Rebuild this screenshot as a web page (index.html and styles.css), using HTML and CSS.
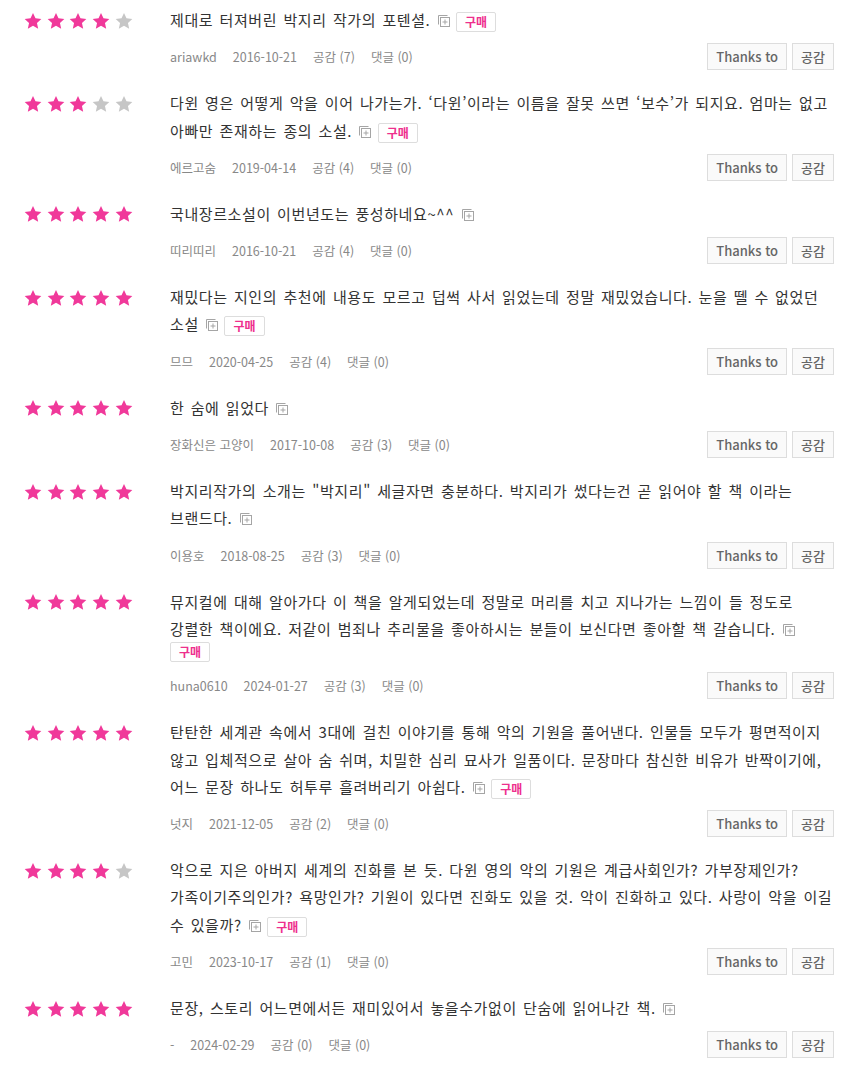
FILE: index.html
```html
<!DOCTYPE html>
<html lang="ko">
<head>
<meta charset="utf-8">
<link rel="stylesheet" href="styles.css">
</head>
<body>
<svg width="0" height="0" class="defs">
  <defs>
    <symbol id="star" viewBox="0 0 24 24"><path d="M12 1.2l3.3 7.1 7.8.9-5.8 5.3 1.6 7.7L12 18.3l-6.9 3.9 1.6-7.7L.9 9.2l7.8-.9z"/></symbol>
    <symbol id="more" viewBox="0 0 13 13"><path d="M1.5 10.5V1.5H10.5" fill="none" stroke="currentColor"/><rect x="3.5" y="3.5" width="9" height="9" fill="#fff" stroke="currentColor"/><path d="M8 5.5v5M5.5 8h5" stroke="currentColor"/></symbol>
  </defs>
</svg>
<ul class="reviews">
  <li class="review">
    <div class="stars"><svg class="on"><use href="#star"/></svg><svg class="on"><use href="#star"/></svg><svg class="on"><use href="#star"/></svg><svg class="on"><use href="#star"/></svg><svg class="off"><use href="#star"/></svg></div>
    <div class="body">
      <p class="text"><span class="t">제대로 터져버린 박지리 작가의 포텐셜.</span> <svg class="more"><use href="#more"/></svg> <span class="buy">구매</span></p>
      <div class="meta"><div class="info"><span>ariawkd</span><span>2016-10-21</span><span>공감 (7)</span><span>댓글 (0)</span></div><div class="actions"><button class="btn">Thanks to</button><button class="btn">공감</button></div></div>
    </div>
  </li>
  <li class="review">
    <div class="stars"><svg class="on"><use href="#star"/></svg><svg class="on"><use href="#star"/></svg><svg class="on"><use href="#star"/></svg><svg class="off"><use href="#star"/></svg><svg class="off"><use href="#star"/></svg></div>
    <div class="body">
      <p class="text"><span class="t">다윈 영은 어떻게 악을 이어 나가는가. ‘다윈’이라는 이름을 잘못 쓰면 ‘보수’가 되지요. 엄마는 없고 아빠만 존재하는 종의 소설.</span> <svg class="more"><use href="#more"/></svg> <span class="buy">구매</span></p>
      <div class="meta"><div class="info"><span>에르고숨</span><span>2019-04-14</span><span>공감 (4)</span><span>댓글 (0)</span></div><div class="actions"><button class="btn">Thanks to</button><button class="btn">공감</button></div></div>
    </div>
  </li>
  <li class="review">
    <div class="stars"><svg class="on"><use href="#star"/></svg><svg class="on"><use href="#star"/></svg><svg class="on"><use href="#star"/></svg><svg class="on"><use href="#star"/></svg><svg class="on"><use href="#star"/></svg></div>
    <div class="body">
      <p class="text"><span class="t">국내장르소설이 이번년도는 풍성하네요~^^</span> <svg class="more"><use href="#more"/></svg></p>
      <div class="meta"><div class="info"><span>띠리띠리</span><span>2016-10-21</span><span>공감 (4)</span><span>댓글 (0)</span></div><div class="actions"><button class="btn">Thanks to</button><button class="btn">공감</button></div></div>
    </div>
  </li>
  <li class="review">
    <div class="stars"><svg class="on"><use href="#star"/></svg><svg class="on"><use href="#star"/></svg><svg class="on"><use href="#star"/></svg><svg class="on"><use href="#star"/></svg><svg class="on"><use href="#star"/></svg></div>
    <div class="body">
      <p class="text"><span class="t">재밌다는 지인의 추천에 내용도 모르고 덥썩 사서 읽었는데 정말 재밌었습니다. 눈을 뗄 수 없었던 소설</span> <svg class="more"><use href="#more"/></svg> <span class="buy">구매</span></p>
      <div class="meta"><div class="info"><span>므므</span><span>2020-04-25</span><span>공감 (4)</span><span>댓글 (0)</span></div><div class="actions"><button class="btn">Thanks to</button><button class="btn">공감</button></div></div>
    </div>
  </li>
  <li class="review">
    <div class="stars"><svg class="on"><use href="#star"/></svg><svg class="on"><use href="#star"/></svg><svg class="on"><use href="#star"/></svg><svg class="on"><use href="#star"/></svg><svg class="on"><use href="#star"/></svg></div>
    <div class="body">
      <p class="text"><span class="t">한 숨에 읽었다</span> <svg class="more"><use href="#more"/></svg></p>
      <div class="meta"><div class="info"><span>장화신은 고양이</span><span>2017-10-08</span><span>공감 (3)</span><span>댓글 (0)</span></div><div class="actions"><button class="btn">Thanks to</button><button class="btn">공감</button></div></div>
    </div>
  </li>
  <li class="review">
    <div class="stars"><svg class="on"><use href="#star"/></svg><svg class="on"><use href="#star"/></svg><svg class="on"><use href="#star"/></svg><svg class="on"><use href="#star"/></svg><svg class="on"><use href="#star"/></svg></div>
    <div class="body">
      <p class="text"><span class="t">박지리작가의 소개는 "박지리" 세글자면 충분하다. 박지리가 썼다는건 곧 읽어야 할 책 이라는 브랜드다.</span> <svg class="more"><use href="#more"/></svg></p>
      <div class="meta"><div class="info"><span>이용호</span><span>2018-08-25</span><span>공감 (3)</span><span>댓글 (0)</span></div><div class="actions"><button class="btn">Thanks to</button><button class="btn">공감</button></div></div>
    </div>
  </li>
  <li class="review">
    <div class="stars"><svg class="on"><use href="#star"/></svg><svg class="on"><use href="#star"/></svg><svg class="on"><use href="#star"/></svg><svg class="on"><use href="#star"/></svg><svg class="on"><use href="#star"/></svg></div>
    <div class="body">
      <p class="text"><span class="t">뮤지컬에 대해 알아가다 이 책을 알게되었는데 정말로 머리를 치고 지나가는 느낌이 들 정도로 강렬한 책이에요. 저같이 범죄나 추리물을 좋아하시는 분들이 보신다면 좋아할 책 갈습니다.</span> <svg class="more"><use href="#more"/></svg> <span class="buy">구매</span></p>
      <div class="meta"><div class="info"><span>huna0610</span><span>2024-01-27</span><span>공감 (3)</span><span>댓글 (0)</span></div><div class="actions"><button class="btn">Thanks to</button><button class="btn">공감</button></div></div>
    </div>
  </li>
  <li class="review">
    <div class="stars"><svg class="on"><use href="#star"/></svg><svg class="on"><use href="#star"/></svg><svg class="on"><use href="#star"/></svg><svg class="on"><use href="#star"/></svg><svg class="on"><use href="#star"/></svg></div>
    <div class="body">
      <p class="text"><span class="t">탄탄한 세계관 속에서 3대에 걸친 이야기를 통해 악의 기원을 풀어낸다. 인물들 모두가 평면적이지 않고 입체적으로 살아 숨 쉬며, 치밀한 심리 묘사가 일품이다. 문장마다 참신한 비유가 반짝이기에, 어느 문장 하나도 허투루 흘려버리기 아쉽다.</span> <svg class="more"><use href="#more"/></svg> <span class="buy">구매</span></p>
      <div class="meta"><div class="info"><span>넛지</span><span>2021-12-05</span><span>공감 (2)</span><span>댓글 (0)</span></div><div class="actions"><button class="btn">Thanks to</button><button class="btn">공감</button></div></div>
    </div>
  </li>
  <li class="review">
    <div class="stars"><svg class="on"><use href="#star"/></svg><svg class="on"><use href="#star"/></svg><svg class="on"><use href="#star"/></svg><svg class="on"><use href="#star"/></svg><svg class="off"><use href="#star"/></svg></div>
    <div class="body">
      <p class="text"><span class="t">악으로 지은 아버지 세계의 진화를 본 듯. 다윈 영의 악의 기원은 계급사회인가? 가부장제인가? 가족이기주의인가? 욕망인가? 기원이 있다면 진화도 있을 것. 악이 진화하고 있다. 사랑이 악을 이길 수 있을까?</span> <svg class="more"><use href="#more"/></svg> <span class="buy">구매</span></p>
      <div class="meta"><div class="info"><span>고민</span><span>2023-10-17</span><span>공감 (1)</span><span>댓글 (0)</span></div><div class="actions"><button class="btn">Thanks to</button><button class="btn">공감</button></div></div>
    </div>
  </li>
  <li class="review">
    <div class="stars"><svg class="on"><use href="#star"/></svg><svg class="on"><use href="#star"/></svg><svg class="on"><use href="#star"/></svg><svg class="on"><use href="#star"/></svg><svg class="on"><use href="#star"/></svg></div>
    <div class="body">
      <p class="text"><span class="t">문장, 스토리 어느면에서든 재미있어서 놓을수가없이 단숨에 읽어나간 책.</span> <svg class="more"><use href="#more"/></svg></p>
      <div class="meta"><div class="info"><span>-</span><span>2024-02-29</span><span>공감 (0)</span><span>댓글 (0)</span></div><div class="actions"><button class="btn">Thanks to</button><button class="btn">공감</button></div></div>
    </div>
  </li>
</ul>
</body>
</html>
```
FILE: styles.css
```css
html, body {
  margin: 0;
  padding: 0;
  background: #fff;
}
body {
  font-family: "Noto Sans CJK KR", "Noto Sans", sans-serif;
  color: #333;
}
.defs {
  position: absolute;
  width: 0;
  height: 0;
}
.reviews {
  list-style: none;
  margin: 0;
  padding: 0;
}
.review {
  display: flex;
  padding: 6px 15px 13px 24px;
}
.stars {
  width: 146px;
  flex: none;
  display: flex;
  align-items: center;
  gap: 4.7px;
  height: 29px;
}
.stars svg {
  width: 18px;
  height: 18px;
}
.stars .on { fill: #f0399a; }
.stars .off { fill: #c6c6c6; }
.body {
  flex: 1;
  min-width: 0;
}
.text {
  margin: 0;
  font-size: 15px;
  line-height: 14px;
  letter-spacing: 0.6px;
  word-spacing: 1.5px;
  word-break: keep-all;
  color: #333;
}
.text .t {
  line-height: 27.3px;
}
.more {
  width: 13px;
  height: 13px;
  color: #a5a5a5;
  vertical-align: -1px;
}
.buy {
  display: inline-block;
  box-sizing: border-box;
  height: 20px;
  line-height: 18px;
  padding: 0 8px;
  border: 1px solid #ddd;
  border-radius: 2px;
  background: #fff;
  color: #ee2f8d;
  font-size: 12px;
  font-weight: 700;
  letter-spacing: 0;
  vertical-align: middle;
}
.meta {
  margin-top: 10px;
  display: flex;
  align-items: center;
  justify-content: space-between;
}
.info {
  display: flex;
  gap: 16px;
  font-size: 12.5px;
  color: #888;
}
.actions {
  display: flex;
  gap: 5px;
}
.btn {
  box-sizing: border-box;
  height: 27px;
  padding: 0 8px;
  border: 1px solid #ddd;
  background: #fafafa;
  color: #666;
  font-family: "Noto Sans CJK KR", "Noto Sans", sans-serif;
  font-size: 13px;
  font-weight: 500;
  line-height: 25px;
  border-radius: 0;
}
```
